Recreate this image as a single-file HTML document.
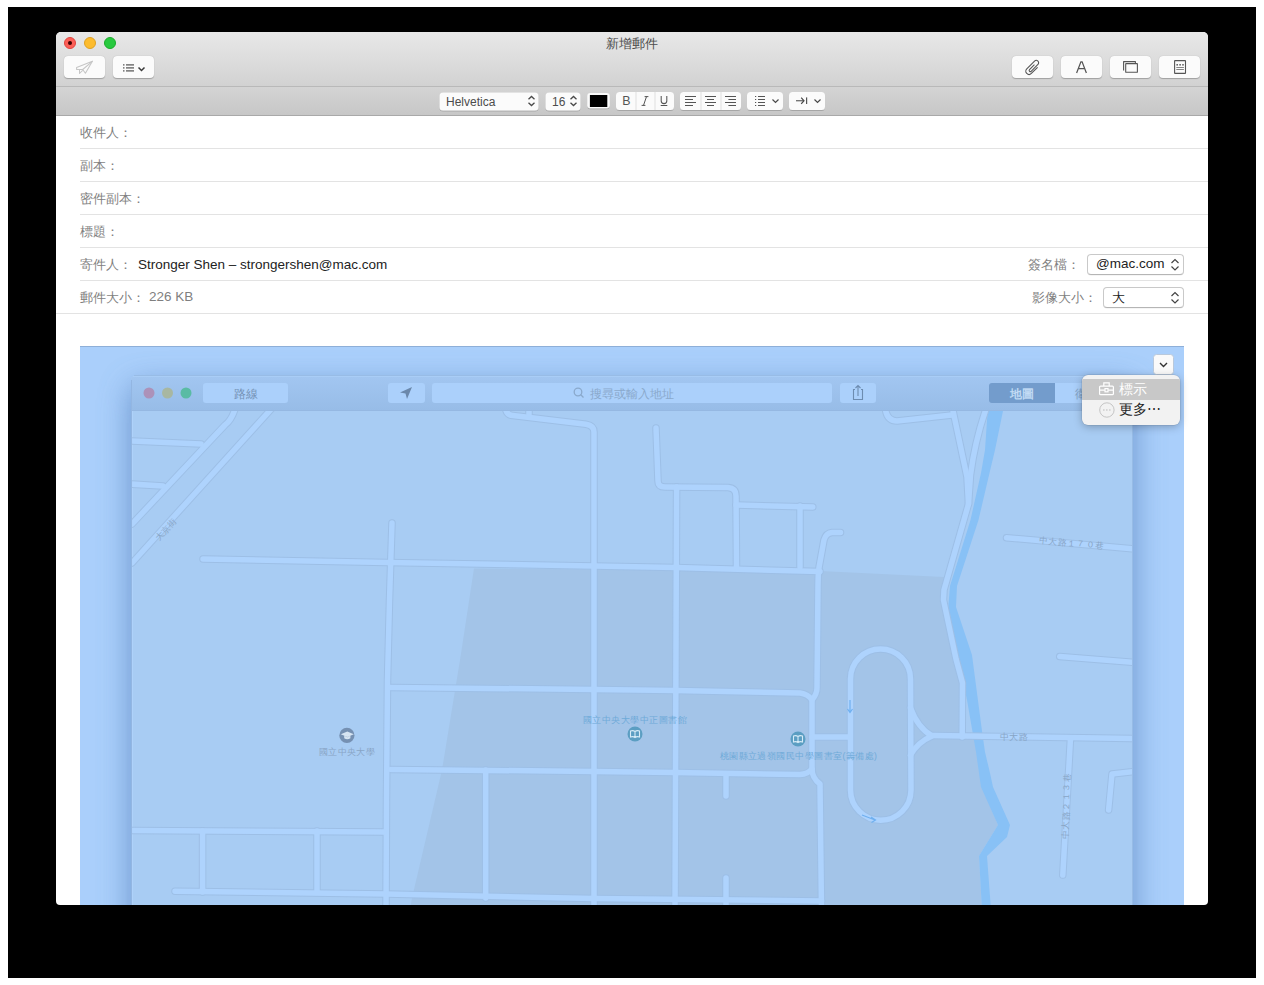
<!DOCTYPE html>
<html><head><meta charset="utf-8">
<style>
*{box-sizing:border-box}
html,body{margin:0;padding:0}
body{width:1264px;height:985px;position:relative;overflow:hidden;background:#fff;font-family:"Liberation Sans",sans-serif;}
.a{position:absolute}
#frame{left:8px;top:7px;width:1248px;height:971px;background:#000}
#win{left:56px;top:32px;width:1152px;height:873px;background:#fff;border-radius:5px 5px 4px 4px;overflow:hidden}
#tb{left:0;top:0;width:1152px;height:55px;background:linear-gradient(#e8e8e8,#d2d2d2);border-bottom:1px solid #b9b9b9}
#fb{left:0;top:55px;width:1152px;height:29px;background:linear-gradient(#d4d4d4,#c7c7c7);border-bottom:1px solid #a9a9a9}
.tl{width:12px;height:12px;border-radius:50%;top:5px}
.btn{background:#fbfbfb;border-radius:4px;box-shadow:0 0.5px 1px rgba(0,0,0,.25);height:22px;top:24px;width:41px}
.fbtn{background:#fbfbfb;border-radius:3px;box-shadow:0 0.5px 1px rgba(0,0,0,.3);height:18px;top:60px}
.lbl{color:#7f7f7f;font-size:13px;}
.hl{height:1px;background:#e3e3e3}
.pop{background:#fff;border:1px solid #c9c9c9;border-bottom-color:#b5b5b5;border-radius:4px;box-shadow:0 0.5px 0.5px rgba(0,0,0,.08)}
</style></head><body>
<div id="frame" class="a"></div>
<div id="win" class="a">
  <div id="tb" class="a">
    <div class="a tl" style="left:8px;background:#fc5f57;border:1px solid #e0443e"><div class="a" style="left:3px;top:3px;width:4.2px;height:4.2px;border-radius:50%;background:#3d0000"></div></div>
    <div class="a tl" style="left:28px;background:#fdbc2e;border:1px solid #dea123"></div>
    <div class="a tl" style="left:48px;background:#28c93f;border:1px solid #1aab29"></div>
    <div class="a" style="left:0;width:1152px;top:4px;text-align:center;font-size:13px;color:#4d4d4d;line-height:15px">新增郵件</div>
    <div class="a btn" style="left:8px"></div>
    <div class="a btn" style="left:57px"></div>
    <div class="a btn" style="left:956px"></div>
    <div class="a btn" style="left:1005px"></div>
    <div class="a btn" style="left:1054px"></div>
    <div class="a btn" style="left:1103px"></div>
    <svg class="a" style="left:0;top:0" width="1152" height="55" viewBox="0 0 1152 55">
      <!-- send plane -->
      <g fill="none" stroke="#c6c6c6" stroke-width="1.05" stroke-linejoin="round" stroke-linecap="round">
        <path d="M36.4 29.3 L20.6 35.4 V37.5 H26.7 L29.4 41.3 Z"/>
        <path d="M26.7 37.5 L36.4 29.3"/>
        <path d="M23.5 37.8 V41.5 L26.4 38.6"/>
      </g>
      <!-- list icon -->
      <g fill="#505050">
        <rect x="67" y="32.3" width="1.5" height="1.2"/><rect x="70" y="32.3" width="8" height="1.2"/>
        <rect x="67" y="35.3" width="1.5" height="1.2"/><rect x="70" y="35.3" width="8" height="1.2"/>
        <rect x="67" y="38.3" width="1.5" height="1.2"/><rect x="70" y="38.3" width="8" height="1.2"/>
      </g>
      <path d="M82.5 35.5 L85.5 38.5 L88.5 35.5" fill="none" stroke="#3a3a3a" stroke-width="1.5"/>
      <!-- paperclip -->
      <path transform="translate(972.6 38.7) rotate(-45)" d="M8.4 3.9 L0 3.9 A3.25 3.25 0 0 1 0 -2.6 L11 -2.6 A2.4 2.4 0 0 1 11 2.2 L1.4 2.2 A1.15 1.15 0 0 1 1.4 -0.1 L8 -0.1" fill="none" stroke="#555" stroke-width="1.1" stroke-linecap="round"/>
      <path d="M1020.6 41 L1024.9 29.8 H1026.1 L1030.4 41 M1022.4 36.6 H1028.6" fill="none" stroke="#555" stroke-width="1.25" stroke-linejoin="miter"/>
      <!-- windows -->
      <g fill="none" stroke="#555" stroke-width="1.1" stroke-linejoin="round">
        <path d="M1067.6 38.4 V29.6 H1079.4 V31.4"/>
        <rect x="1069.7" y="31.6" width="11.7" height="8.7" rx="0.3"/>
      </g>
      <!-- doc -->
      <g>
        <rect x="1118.6" y="28.6" width="10.9" height="12.8" rx="0.4" fill="none" stroke="#555" stroke-width="1.1"/>
        <rect x="1120.4" y="32" width="1.6" height="1.6" fill="#666"/><rect x="1123.3" y="32" width="1.6" height="1.6" fill="#666"/><rect x="1126.2" y="32" width="1.6" height="1.6" fill="#666"/>
        <rect x="1120.3" y="35" width="7.6" height="0.9" fill="#777"/><rect x="1120.3" y="37" width="7.6" height="0.9" fill="#777"/>
      </g>
    </svg>
  </div>
  <div id="fb" class="a">
    <svg class="a" style="left:0;top:0" width="1152" height="29" viewBox="0 0 1152 29">
      <defs><filter id="sh" x="-10%" y="-20%" width="120%" height="150%"><feDropShadow dx="0" dy="0.5" stdDeviation="0.4" flood-color="#000" flood-opacity="0.35"/></filter></defs>
      <g fill="#fbfbfb" filter="url(#sh)">
        <rect x="383.5" y="5.5" width="99" height="18" rx="3.5"/>
        <rect x="489.5" y="5.5" width="35" height="18" rx="3.5"/>
        <rect x="531.2" y="6" width="22.6" height="15.2" rx="3"/>
        <rect x="560" y="5" width="58" height="18" rx="3.5"/>
        <rect x="624" y="5" width="61" height="18" rx="3.5"/>
        <rect x="691" y="5" width="36" height="18" rx="3.5"/>
        <rect x="733" y="5" width="36" height="18" rx="3.5"/>
      </g>
      <rect x="533.9" y="8" width="17.4" height="12" fill="#000"/>
      <g fill="#e0e0e0"><rect x="579.5" y="5" width="1" height="18"/><rect x="598.5" y="5" width="1" height="18"/><rect x="644.5" y="5" width="1" height="18"/><rect x="664.5" y="5" width="1" height="18"/></g>
      <g font-family="Liberation Sans" fill="#4c4c4c">
        <text x="390" y="19.3" font-size="12">Helvetica</text>
        <text x="496" y="19.3" font-size="12">16</text>
      </g>
      <g fill="none" stroke="#4a4a4a" stroke-width="1.3">
        <path d="M472.5 12.3 L475.5 9.5 L478.5 12.3 M472.5 15.7 L475.5 18.5 L478.5 15.7"/>
        <path d="M514.5 12.3 L517.5 9.5 L520.5 12.3 M514.5 15.7 L517.5 18.5 L520.5 15.7"/>
        <path d="M822.5 0"/>
      </g>
      <text x="566.3" y="18" font-family="Liberation Sans" font-size="12.4" fill="#555">B</text>
      <path d="M588.6 9.6 H592.4 M585.6 18.4 H589.4 M590.5 9.6 L587.5 18.4" fill="none" stroke="#555" stroke-width="1"/>
      <path d="M605.2 9 V14 Q605.2 16.6 608 16.6 Q610.8 16.6 610.8 14 V9" fill="none" stroke="#555" stroke-width="1.05"/>
      <rect x="604.7" y="18" width="6.6" height="1" fill="#555"/>
      <g fill="#555">
        <rect x="629" y="9" width="11" height="1"/><rect x="629" y="12" width="8" height="1"/><rect x="629" y="15" width="11" height="1"/><rect x="629" y="18" width="8" height="1"/>
        <rect x="649" y="9" width="11" height="1"/><rect x="651" y="12" width="7" height="1"/><rect x="649" y="15" width="11" height="1"/><rect x="651" y="18" width="7" height="1"/>
        <rect x="669" y="9" width="11" height="1"/><rect x="672.4" y="12" width="7.6" height="1"/><rect x="669" y="15" width="11" height="1"/><rect x="672.4" y="18" width="7.6" height="1"/>
        <rect x="699" y="9" width="1.2" height="1"/><rect x="702" y="9" width="7" height="1"/>
        <rect x="699" y="12" width="1.2" height="1"/><rect x="702" y="12" width="7" height="1"/>
        <rect x="699" y="15" width="1.2" height="1"/><rect x="702" y="15" width="7" height="1"/>
        <rect x="699" y="18" width="1.2" height="1"/><rect x="702" y="18" width="7" height="1"/>
        <rect x="740" y="13.2" width="8" height="1.1"/><rect x="750" y="10.4" width="1.2" height="6.6"/>
      </g>
      <g fill="none" stroke="#4a4a4a" stroke-width="1.2">
        <path d="M716.5 12.5 L719.5 15.5 L722.5 12.5"/>
        <path d="M758.5 12.5 L761.5 15.5 L764.5 12.5"/>
        <path d="M745.2 10.6 L748 13.75 L745.2 16.9"/>
      </g>
    </svg>
  </div>

  <!-- header fields (page coords minus 56,32) -->
  <div class="a hl" style="left:24px;top:116px;width:1128px"></div>
  <div class="a hl" style="left:24px;top:149px;width:1128px"></div>
  <div class="a hl" style="left:24px;top:182px;width:1128px"></div>
  <div class="a hl" style="left:24px;top:215px;width:1128px"></div>
  <div class="a hl" style="left:24px;top:248px;width:1128px"></div>
  <div class="a hl" style="left:0;top:281px;width:1152px"></div>
  <div class="a lbl" style="left:24px;top:92px">收件人：</div>
  <div class="a lbl" style="left:24px;top:125px">副本：</div>
  <div class="a lbl" style="left:24px;top:158px">密件副本：</div>
  <div class="a lbl" style="left:24px;top:191px">標題：</div>
  <div class="a lbl" style="left:24px;top:224px">寄件人：</div>
  <div class="a" style="left:82px;top:224.5px;font-size:13.5px;color:#222">Stronger Shen – strongershen@mac.com</div>
  <div class="a lbl" style="left:24px;top:257px">郵件大小：</div>
  <div class="a" style="left:93px;top:257px;font-size:13.5px;color:#7f7f7f">226 KB</div>
  <div class="a lbl" style="left:972px;top:224px">簽名檔：</div>
  <div class="a lbl" style="left:976px;top:257px">影像大小：</div>
  <div class="a pop" style="left:1031px;top:222px;width:97px;height:21px"></div>
  <div class="a" style="left:1040px;top:224px;font-size:13.5px;color:#222">@mac.com</div>
  <div class="a pop" style="left:1047px;top:255px;width:81px;height:21px"></div>
  <div class="a" style="left:1056px;top:257px;font-size:13px;color:#222">大</div>
  <svg class="a" style="left:1112px;top:224px" width="14" height="50"><g fill="none" stroke="#444" stroke-width="1.2"><path d="M3.5 7 L7 3.5 L10.5 7 M3.5 10.5 L7 14 L10.5 10.5"/><path d="M3.5 40 L7 36.5 L10.5 40 M3.5 43.5 L7 47 L10.5 43.5"/></g></svg>

  <!-- MAP IMAGE: page coords via translate -->
  <svg class="a" style="left:24px;top:314px" width="1104" height="559" viewBox="80 346 1104 559">
    <defs>
      <linearGradient id="shl" x1="0" x2="1"><stop offset="0" stop-color="#aacffb" stop-opacity="0"/><stop offset="1" stop-color="#8fb2dc"/></linearGradient>
      <linearGradient id="shr" x1="0" x2="1"><stop offset="0" stop-color="#8fb2dc"/><stop offset="1" stop-color="#aacffb" stop-opacity="0"/></linearGradient>
      <linearGradient id="sht" x1="0" y1="0" x2="0" y2="1"><stop offset="0" stop-color="#aacffb" stop-opacity="0"/><stop offset="1" stop-color="#9fc3ee"/></linearGradient>
      <filter id="blur" x="-20%" y="-20%" width="140%" height="140%"><feGaussianBlur stdDeviation="16"/></filter>
      <linearGradient id="itb" x1="0" y1="0" x2="0" y2="1"><stop offset="0" stop-color="#a2c6f1"/><stop offset="1" stop-color="#97bce7"/></linearGradient>
      <clipPath id="mapclip"><rect x="132" y="411" width="1000" height="500"/></clipPath>
    </defs>
    <rect x="80" y="346" width="1104" height="559" fill="#aacffb"/>
    <rect x="80" y="346" width="1104" height="1" fill="#8eafd8"/>
    <!-- shadows -->
    <rect x="131" y="386" width="1002" height="600" rx="6" fill="#5884c0" opacity="0.8" filter="url(#blur)"/>
    <!-- inner window -->
    <rect x="131" y="376" width="1002" height="530" rx="4" fill="#a8ccf3"/>
    <path d="M131 411 V380 Q131 376 135 376 H1129 Q1133 376 1133 380 V411 Z" fill="url(#itb)"/>
    <rect x="134" y="375" width="996" height="1" fill="#98bce6"/>
    <rect x="133" y="376" width="998" height="1" fill="#a9cdf6"/>
    <rect x="131" y="410" width="1002" height="1" fill="#95b8e2"/>
    <rect x="131" y="380" width="1" height="530" fill="#93b6e2"/>
    <rect x="132" y="411" width="1" height="500" fill="#aed2fa"/>
    <rect x="1132" y="380" width="1" height="530" fill="#98bbe6"/>
    <g clip-path="url(#mapclip)">
      <!-- campus dark polygon -->
      <path d="M474 568.5 L820 571 L944 577 L944 600 L956 659 L962 690 L962 737 L975 737 L982 787 L998 825 L979 856 L982 910 L410 910 L412 898 L442 770 L460 660 Z" fill="#a3c4e8"/>
      <!-- river -->
      <path d="M988 406 L1004 406 L995 450 L989.5 473 L978.5 520 L957 586 L956 607 L972 655 L982 731 L985 752 L990 773 L993 787 L1010 825 L1007 837 L987 856 L991 910 L982 910 L979 856 L998 825 L981 787 L976 752 L967 700 L948 610 L950 586 L970.5 520 L981 473 L985 450 Z" fill="#88c1f6"/>
      <!-- roads: border then fill -->
      <g fill="none" stroke-linecap="round" stroke-linejoin="round" id="roads">
        <g stroke="#9dbfe6" stroke-width="7.5" id="rb">
          
<path d="M236 406 Q232 420 225 425 L132 524"/>
<path d="M274 406 L132 563"/>
<path d="M130 441 L201 444"/>
<path d="M130 484 L163 486"/>
<path d="M203 559 L387 562.5 L594 566 L676 567.5 L820 571.5"/>
<path d="M392 523 L389.5 600 L387.5 680 L386.5 800 L386 910"/>
<path d="M505 406 Q506 415.5 513 415.5 L586 424.2 Q594 425.5 594 432 L594 910"/>
<path d="M529 406 V414"/>
<path d="M656 428 L658 481 Q658 487 665 487 L728 487.5 Q736 488 736 496 L736.5 567"/>
<path d="M736 505 L812.8 507"/>
<path d="M676.6 487 L675 910"/>
<path d="M800 506 L800 567"/>
<path d="M840.5 532.5 L832 532.5 Q826 533 824 540 L819 567.5 Q818 575 818 585 L817 688 Q817 694 812 700 L812 769 Q812 778 820 784 L821.5 910"/>
<path d="M130 830.5 L384 832"/>
<path d="M202.6 831 V892"/>
<path d="M317 831 V892"/>
<path d="M175 891.2 L386 894 L594 898.5 L821.5 901"/>
<path d="M391 687.4 L594 689.5 L675 690.5 L800 693 Q808 694 812 700"/>
<path d="M391 769.4 L594 771.5 L675 772.5 L800 774.5 Q808 774 812 769"/>
<path d="M485.7 770 V898"/>
<path d="M726 774 V796"/>
<path d="M726 878 V910"/>
<path d="M812 737 L848.5 737"/>
<path d="M850.5 679 A30 30 0 0 1 910.5 679 L911 790 A30 30 0 0 1 850.5 790 Z"/>
<path d="M910.5 708 Q918 728 932 736 Q918 742 910.5 755"/>
<path d="M932 735.5 L1132 738.5"/>
<path d="M885 406 Q886 421 897 421 L952 415"/>
<path d="M952 406 L967 477 L968.5 504 L944 590 L943.5 600 L956 659 L962.5 683 L962.2 737"/>
<path d="M987 406 Q975 440 970.5 475 L968.5 504"/>
<path d="M1006.5 537.7 L1140 549.5"/>
<path d="M1059.7 656.5 L1140 663"/>
<path d="M1070.5 738 L1062.8 875"/>
<path d="M1140 770.8 L1112 774 L1108.6 810"/>

        </g>
        <g stroke="#aed3fd" stroke-width="5.5">
          
<path d="M236 406 Q232 420 225 425 L132 524"/>
<path d="M274 406 L132 563"/>
<path d="M130 441 L201 444"/>
<path d="M130 484 L163 486"/>
<path d="M203 559 L387 562.5 L594 566 L676 567.5 L820 571.5"/>
<path d="M392 523 L389.5 600 L387.5 680 L386.5 800 L386 910"/>
<path d="M505 406 Q506 415.5 513 415.5 L586 424.2 Q594 425.5 594 432 L594 910"/>
<path d="M529 406 V414"/>
<path d="M656 428 L658 481 Q658 487 665 487 L728 487.5 Q736 488 736 496 L736.5 567"/>
<path d="M736 505 L812.8 507"/>
<path d="M676.6 487 L675 910"/>
<path d="M800 506 L800 567"/>
<path d="M840.5 532.5 L832 532.5 Q826 533 824 540 L819 567.5 Q818 575 818 585 L817 688 Q817 694 812 700 L812 769 Q812 778 820 784 L821.5 910"/>
<path d="M130 830.5 L384 832"/>
<path d="M202.6 831 V892"/>
<path d="M317 831 V892"/>
<path d="M175 891.2 L386 894 L594 898.5 L821.5 901"/>
<path d="M391 687.4 L594 689.5 L675 690.5 L800 693 Q808 694 812 700"/>
<path d="M391 769.4 L594 771.5 L675 772.5 L800 774.5 Q808 774 812 769"/>
<path d="M485.7 770 V898"/>
<path d="M726 774 V796"/>
<path d="M726 878 V910"/>
<path d="M812 737 L848.5 737"/>
<path d="M850.5 679 A30 30 0 0 1 910.5 679 L911 790 A30 30 0 0 1 850.5 790 Z"/>
<path d="M910.5 708 Q918 728 932 736 Q918 742 910.5 755"/>
<path d="M932 735.5 L1132 738.5"/>
<path d="M885 406 Q886 421 897 421 L952 415"/>
<path d="M952 406 L967 477 L968.5 504 L944 590 L943.5 600 L956 659 L962.5 683 L962.2 737"/>
<path d="M987 406 Q975 440 970.5 475 L968.5 504"/>
<path d="M1006.5 537.7 L1140 549.5"/>
<path d="M1059.7 656.5 L1140 663"/>
<path d="M1070.5 738 L1062.8 875"/>
<path d="M1140 770.8 L1112 774 L1108.6 810"/>

        </g>
      </g>
      <!-- arrows -->
      <g stroke="#6fb0f0" stroke-width="1.2" fill="none">
        <path d="M850 700 V712 M847.5 709 L850 712.5 L852.5 709"/>
        <path d="M862 815 L875 820 M871 817 L875.5 820 L871.5 822.5"/>
      </g>
    </g>
    <!-- inner toolbar -->
    <g fill="#abd0fb">
      <rect x="203" y="383" width="85" height="20" rx="3"/>
      <rect x="388" y="383" width="37" height="20" rx="3"/>
      <rect x="432" y="383" width="400" height="20" rx="3"/>
      <rect x="840" y="383" width="36" height="20" rx="3"/>
      <rect x="1055" y="383" width="40" height="20" rx="0"/>
    </g>
    <path d="M1055 383 H992 Q989 383 989 386 V400 Q989 403 992 403 H1055 Z" fill="#739ccc"/>
    <circle cx="149" cy="393" r="5.5" fill="#ac92b9"/>
    <circle cx="167.5" cy="393" r="5.5" fill="#a8b7a1"/>
    <circle cx="186" cy="393" r="5.5" fill="#5abba4"/>
    <text x="245.5" y="397.5" font-size="12" fill="#7593b6" text-anchor="middle">路線</text>
    <path d="M400 392.5 L412 387 L407 399 L405.5 393.5 Z" fill="#6b88ab"/>
    <g fill="none" stroke="#8aa9cc" stroke-width="1.3"><circle cx="578" cy="392" r="3.8"/><path d="M580.8 394.8 L583.5 397.5"/></g>
    <text x="590" y="397.5" font-size="12" fill="#8aa9cc">搜尋或輸入地址</text>
    <g fill="none" stroke="#6d8cb0" stroke-width="1.1"><path d="M855 389.5 H853.5 V399.5 H862.5 V389.5 H861"/><path d="M858 396 V385.5 M855.5 388 L858 385.5 L860.5 388"/></g>
    <text x="1022" y="397.5" font-size="12" fill="#c9e0f8" stroke="#c9e0f8" stroke-width="0.3" text-anchor="middle">地圖</text>
    <text x="1075" y="397.5" font-size="12" fill="#7f9ec2">衛星</text>
    <!-- map labels -->
    <g font-size="8.5" fill="#88a5c6" letter-spacing="0.45">
      <text x="166" y="532" text-anchor="middle" transform="rotate(-47 166 529)">大京街</text>
      <text x="347" y="754.5" text-anchor="middle">國立中央大學</text>
      <text x="1072" y="546" text-anchor="middle" transform="rotate(5 1072 543)">中大路１７０巷</text>
      <text x="1014" y="740" text-anchor="middle">中大路</text>
      <text x="1066" y="809" text-anchor="middle" transform="rotate(-88 1066 806)">中大路２１３巷</text>
    </g>
    <g font-size="8.5" fill="#6faad8" letter-spacing="0.45">
      <text x="635" y="722.5" text-anchor="middle">國立中央大學中正圖書館</text>
      <text x="798.5" y="758.5" text-anchor="middle">桃園縣立過嶺國民中學圖書室(籌備處)</text>
    </g>
    <circle cx="346.9" cy="735.4" r="7.6" fill="#7590b2"/>
    <path d="M340.8 734.3 L347.3 731.6 L353.8 734.3 L347.3 737 Z M344.2 735.8 V738.2 Q347.3 740.2 350.4 738.2 V735.8 L347.3 737.3 Z" fill="#d6e4f2"/>
    <circle cx="635" cy="734" r="7.5" fill="#5b9ec2"/>
    <circle cx="798" cy="739" r="7.5" fill="#5b9ec2"/>
    <g fill="none" stroke="#d6ebf7" stroke-width="1.1"><path d="M630.5 731 V737 Q633 736 635 737.5 Q637 736 639.5 737 V731 Q637 730 635 731.5 Q633 730 630.5 731 Z M635 731.5 V737.5"/><path d="M793.5 736 V742 Q796 741 798 742.5 Q800 741 802.5 742 V736 Q800 735 798 736.5 Q796 735 793.5 736 Z M798 736.5 V742.5"/></g>
    <!-- dropdown button & popup -->
    <rect x="1153.5" y="354.5" width="20" height="20" rx="3" fill="#fafafa" stroke="#b9c9dc" stroke-width="1"/>
    <path d="M1160 363 L1163.5 366.5 L1167 363" fill="none" stroke="#333" stroke-width="1.4"/>
  </svg>
  <div class="a" style="left:1026px;top:343px;width:98px;height:50px;background:#f2f2f2;border-radius:6px;box-shadow:0 2px 8px rgba(0,0,0,.25), 0 0 0 0.5px rgba(0,0,0,.12);overflow:hidden">
    <div class="a" style="left:0;top:4px;width:98px;height:21px;background:#c8c8c8"></div>
    <svg class="a" style="left:0;top:0" width="98" height="50">
      <g fill="none" stroke="#fff" stroke-width="1.2"><rect x="17.6" y="11.1" width="13.8" height="8.6" rx="1"/><path d="M21.8 11.1 V7.8 H27.2 V11.1 M17.6 15.2 H22.9 M26.1 15.2 H31.4"/><rect x="23" y="13.6" width="3" height="3.2"/></g>
      <g fill="none" stroke="#c4c4c4" stroke-width="1"><circle cx="24.9" cy="35" r="7.2"/></g>
      <g fill="#bdbdbd"><circle cx="21.9" cy="35" r="0.75"/><circle cx="24.9" cy="35" r="0.75"/><circle cx="27.9" cy="35" r="0.75"/></g>
    </svg>
    <div class="a" style="left:37px;top:4px;font-size:14px;color:#fff;line-height:20px">標示</div>
    <div class="a" style="left:37px;top:24px;font-size:14px;color:#222;line-height:20px">更多⋯</div>
  </div>
</div>
</body></html>
